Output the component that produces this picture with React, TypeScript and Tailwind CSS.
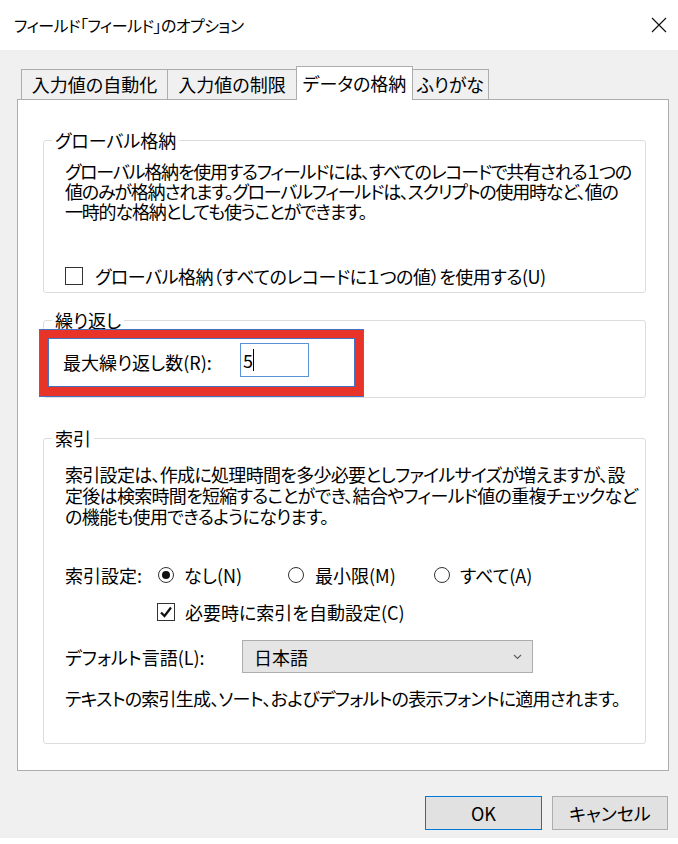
import React from 'react'

function CheckBox({ checked }: { checked?: boolean }) {
  return (
    <span className="w-[18px] h-[18px] border border-[#333333] bg-white flex items-center justify-center shrink-0">
      {checked && (
        <svg width="14" height="14" viewBox="0 0 14 14">
          <path d="M2 7.5 L5.5 11 L12 2.5" fill="none" stroke="#111" strokeWidth="2.2" />
        </svg>
      )}
    </span>
  )
}

function Radio({ checked }: { checked?: boolean }) {
  return (
    <span className="w-[16px] h-[16px] rounded-full border border-[#333333] bg-white flex items-center justify-center shrink-0">
      {checked && <span className="w-[8px] h-[8px] rounded-full bg-[#111111]" />}
    </span>
  )
}

function Group({ title, children, className = '' }: { title: string; children: React.ReactNode; className?: string }) {
  return (
    <fieldset className={`relative border border-[#dcdcdc] rounded-[3px] p-0 ${className}`}>
      <legend className="ml-[8px] px-[3px] leading-[20px] text-[18px]">{title}</legend>
      {children}
    </fieldset>
  )
}

export default function App() {
  return (
    <div className="w-[678px] h-[844px] bg-white overflow-hidden text-black [font-family:'Noto_Sans_CJK_JP','Noto_Sans_CJK_SC',sans-serif] [font-feature-settings:'palt']">
      {/* title bar */}
      <div className="h-[50px] flex items-center justify-between pl-[14px] pr-[11px]">
        <span className="text-[16px] leading-none tracking-[-0.55px]">フィールド「フィールド」のオプション</span>
        <svg width="16" height="16" viewBox="0 0 16 16">
          <path d="M1 1 L15 15 M15 1 L1 15" stroke="#111" strokeWidth="1.2" />
        </svg>
      </div>

      <div className="h-[788px] bg-[#f0f0f0] pt-[16px] pl-[17px]">
        {/* tabs */}
        <div className="relative z-10 flex items-end h-[34px] -mb-px pl-[4px] text-[18px]">
          <div className="w-[147px] h-[30px] mb-px border border-b-0 border-[#adadad] bg-[#f0f0f0] flex items-center justify-center">
            入力値の自動化
          </div>
          <div className="-ml-px w-[130px] h-[30px] mb-px border border-b-0 border-[#adadad] bg-[#f0f0f0] flex items-center justify-center">
            入力値の制限
          </div>
          <div className="-ml-px w-[117px] h-[34px] border border-b-0 border-[#adadad] bg-white flex items-center justify-center pb-[1px]">
            データの格納
          </div>
          <div className="-ml-px w-[77px] h-[30px] mb-px border border-b-0 border-[#adadad] bg-[#f0f0f0] flex items-center justify-center">
            ふりがな
          </div>
        </div>

        {/* panel */}
        <div className="w-[652px] h-[672px] border border-[#adadad] bg-white pt-[30px] pl-[25px] pr-[22px] text-[18px]">
          <Group title="グローバル格納">
            <div className="pt-[11px] pb-[6px] pl-[21px]">
              <div className="leading-[20px] whitespace-nowrap tracking-[-1.2px]">
                <div>グローバル格納を使用するフィールドには、すべてのレコードで共有される１つの</div>
                <div>値のみが格納されます。グローバルフィールドは、スクリプトの使用時など、値の</div>
                <div>一時的な格納としても使うことができます。</div>
              </div>
              <div className="mt-[45px] h-[20px] flex items-center gap-[12px] leading-[20px]">
                <CheckBox />
                <span className="whitespace-nowrap tracking-[-0.45px]">グローバル格納（すべてのレコードに１つの値）を使用する(U)</span>
              </div>
            </div>
          </Group>

          <Group title="繰り返し" className="mt-[17px]">
            <div className="pt-[13px] pb-[20px] pl-[19px] flex items-center">
              <span className="w-[177px] leading-[20px] pt-[4px]">最大繰り返し数(R):</span>
              <div className="w-[69px] h-[34px] border border-[#5a92d8] bg-white flex items-center pl-[2px]">
                <span className="leading-none">5</span>
                <span className="w-px h-[22px] bg-black" />
              </div>
            </div>
            {/* annotation */}
            <div className="absolute left-[-5px] top-[-1px] w-[325px] h-[68px] border border-[#4472c4]">
              <div className="h-full border-[8px] border-b-[9px] border-[#e83328] shadow-[inset_0_0_0_1px_#4472c4]" />
            </div>
          </Group>

          <Group title="索引" className="mt-[30px]">
            <div className="pt-[16px] pb-[35px] pl-[21px]">
              <div className="leading-[21px] whitespace-nowrap tracking-[-0.7px]">
                <div>索引設定は、作成に処理時間を多少必要としファイルサイズが増えますが、設</div>
                <div>定後は検索時間を短縮することができ、結合やフィールド値の重複チェックなど</div>
                <div>の機能も使用できるようになります。</div>
              </div>
              <div className="mt-[38px] h-[20px] flex items-center leading-[20px] whitespace-nowrap">
                <span className="w-[93px]">索引設定:</span>
                <div className="w-[130px] flex items-center gap-[10px]">
                  <Radio checked />
                  <span>なし(N)</span>
                </div>
                <div className="w-[146px] flex items-center gap-[11px]">
                  <Radio />
                  <span>最小限(M)</span>
                </div>
                <div className="flex items-center gap-[10px]">
                  <Radio />
                  <span>すべて(A)</span>
                </div>
              </div>
              <div className="mt-[17px] h-[20px] pl-[92px] flex items-center gap-[10px] leading-[20px] whitespace-nowrap">
                <CheckBox checked />
                <span>必要時に索引を自動設定(C)</span>
              </div>
              <div className="mt-[18px] flex items-center leading-[20px]">
                <span className="w-[177px] whitespace-nowrap">デフォルト言語(L):</span>
                <div className="w-[291px] h-[33px] bg-[#e5e5e5] border border-[#adadad] flex items-center justify-between pl-[11px] pr-[10px]">
                  <span>日本語</span>
                  <svg width="9" height="6" viewBox="0 0 9 6">
                    <path d="M1 1 L4.5 4.5 L8 1" fill="none" stroke="#606060" strokeWidth="1.2" />
                  </svg>
                </div>
              </div>
              <div className="mt-[15px] leading-[20px] whitespace-nowrap tracking-[-0.75px]">
                テキストの索引生成、ソート、およびデフォルトの表示フォントに適用されます。
              </div>
            </div>
          </Group>
        </div>

        {/* buttons */}
        <div className="w-[652px] mt-[25px] flex justify-end gap-[10px] pr-[1px] text-[18px]">
          <button className="w-[117px] h-[34px] bg-[#e1e1e1] border border-[#0078d7] flex items-center justify-center">
            OK
          </button>
          <button className="w-[116px] h-[34px] bg-[#e1e1e1] border border-[#adadad] flex items-center justify-center">
            キャンセル
          </button>
        </div>
      </div>
    </div>
  )
}
